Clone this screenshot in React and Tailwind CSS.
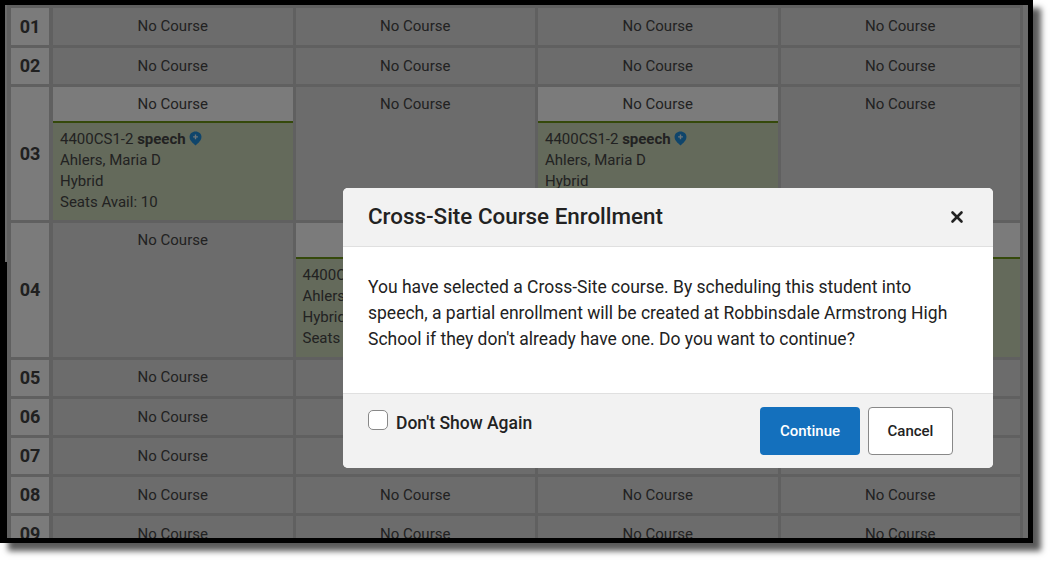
import { X } from "lucide-react";

const periods = ["01", "02", "03", "04", "05", "06", "07", "08", "09"];

// which columns hold a course, per period
const cards = { "03": [0, 2], "04": [1, 3] };

const PinIcon = () => (
  <svg viewBox="0 0 14 16" className="inline-block w-[13px] h-[15px] ml-[3px] align-[-2px]">
    <path
      d="M7 0.5C3.3 0.5 0.6 3 0.6 6.4c0 3.6 3.4 6.6 6.4 9.1 3-2.5 6.4-5.5 6.4-9.1C13.4 3 10.7 0.5 7 0.5z"
      fill="#1f8ad6"
    />
    <path d="M7 3.6v5.2M4.4 6.2h5.2" stroke="#d8e8f0" strokeWidth="1.5" />
  </svg>
);

const EmptyCell = () => (
  <div className="bg-[#d8d8d8] text-center pt-[7.6px] leading-[21px] overflow-hidden">No Course</div>
);

const CourseCell = () => (
  <div className="bg-[#c8d4b6] flex flex-col overflow-hidden">
    <div className="bg-[#f6f6f6] text-center h-[36px] pt-[7.6px] leading-[21px] border-b-2 border-[#6a9216] shrink-0">
      No Course
    </div>
    <div className="pl-[7px] pt-[6px] leading-[21px]">
      <div>
        4400CS1-2 <span className="font-bold">speech</span>
        <PinIcon />
      </div>
      <div>Ahlers, Maria D</div>
      <div>Hybrid</div>
      <div>Seats Avail: 10</div>
    </div>
  </div>
);

const App = () => {
  return (
    <div className="w-[1058px] h-[568px] bg-white overflow-hidden font-['Roboto',sans-serif]">
      <div className="relative w-[1033px] h-[543px] border-[5px] border-black overflow-hidden shadow-[8px_8px_6px_rgba(0,0,0,0.65)] bg-[#c0c0c0]">
        <div className="h-full flex bg-[#c0c0c0] text-[15px] text-[#444]">
          <div className="w-[2px] shrink-0 bg-[#d8d8d8]"></div>
          <div className="flex-1 pl-[4px] pt-[3px]">
            <div className="grid grid-cols-[39px_repeat(4,239.5px)] gap-[3px] grid-rows-[37px_35.8px_133px_133.8px_36.4px_36px_36px_36px_36px]">
              {periods.map((period) => (
                <div key={period} className="contents">
                  <div className="bg-[#f6f6f6] mr-[1px] flex items-center justify-center font-bold text-[18px] text-[#404040] overflow-hidden">
                    {period}
                  </div>
                  {[0, 1, 2, 3].map((col) =>
                    cards[period]?.includes(col) ? <CourseCell key={col} /> : <EmptyCell key={col} />
                  )}
                </div>
              ))}
            </div>
          </div>
          <div className="w-[5px] shrink-0 bg-[#d8d8d8]"></div>
        </div>

        {/* dimmed backdrop */}
        <div className="absolute inset-0 bg-[rgba(0,0,0,0.5)]"></div>
        <div className="absolute left-0 top-[257px] bottom-0 w-[2px] bg-black"></div>

        <div className="absolute left-[338px] top-[183px] w-[650px] h-[280px] rounded-[5px] overflow-hidden bg-white flex flex-col text-[#222]">
          <div className="h-[59px] shrink-0 bg-[#f2f2f2] border-b border-[#e0e0e0] pl-[25px] pr-[27px] pb-[1px] flex items-center justify-between">
            <h2 className="text-[22.4px] font-medium">Cross-Site Course Enrollment</h2>
            <X className="w-[18px] h-[18px] text-[#222] mt-[1px]" strokeWidth={3.5} />
          </div>
          <div className="flex-1 px-[25px] pt-[27px] text-[17.5px] leading-[26px]">
            You have selected a Cross-Site course. By scheduling this student into speech, a partial enrollment will be
            created at Robbinsdale Armstrong High School if they don't already have one. Do you want to continue?
          </div>
          <div className="h-[75px] shrink-0 bg-[#f2f2f2] border-t border-[#e0e0e0] pl-[25px] pr-[40px] flex justify-between">
            <label className="flex items-start gap-[8px] pt-[16px]">
              <span className="w-[20px] h-[20px] rounded-[5px] bg-white border border-[#888]"></span>
              <span className="text-[17.5px] font-medium leading-[26px]">Don't Show Again</span>
            </label>
            <div className="flex gap-[8px] pt-[13px]">
              <button className="w-[100px] h-[48px] rounded-[4px] bg-[#1470bd] text-white text-[15px] font-medium">
                Continue
              </button>
              <button className="w-[85px] h-[48px] rounded-[4px] bg-white border border-[#888] text-[#222] text-[15px] font-medium">
                Cancel
              </button>
            </div>
          </div>
        </div>
      </div>
    </div>
  );
};

export default App;
